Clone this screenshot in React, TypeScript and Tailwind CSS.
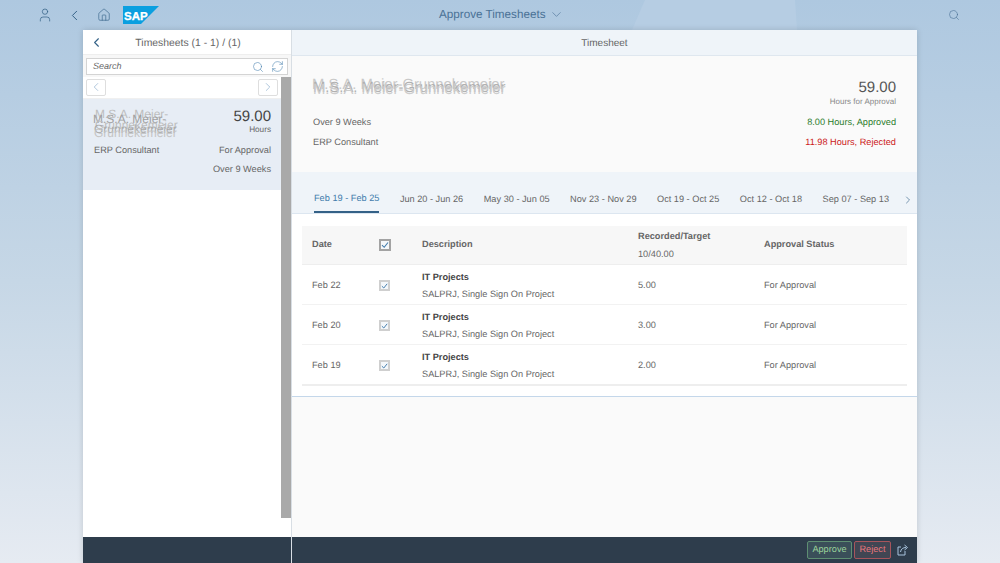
import React from "react";
import { ChevronLeft, ChevronRight, ChevronDown, Search, RefreshCw, Home, User } from "lucide-react";

function Scrambled({ lines, className }: { lines: { t: string; x: number; y: number; o: string }[]; className: string }) {
  return (
    <div className={"relative " + className}>
      {lines.map((l, i) => (
        <span key={i} className={"absolute left-0 top-0 whitespace-nowrap " + l.o} style={{ transform: `translate(${l.x}px, ${l.y}px)` }}>
          {l.t}
        </span>
      ))}
    </div>
  );
}

function Box({ size = "s" }: { size?: "s" | "h" }) {
  return (
    <div className={size === "h" ? "w-[12px] h-[12px] border-2 border-[#a3a3a3] bg-[#f4f7fa] flex items-center justify-center" : "w-[11px] h-[11px] border-2 border-[#cfcfcf] bg-[#f4f7fa] flex items-center justify-center"}>
      <svg width="8" height="8" viewBox="0 0 8 8" fill="none"><path d="M1 4.2 L3.2 6.3 L7 1.5" stroke="#427cac" strokeWidth="1.1" /></svg>
    </div>
  );
}

const rows = [
  { d: "Feb 22", h: "5.00" },
  { d: "Feb 20", h: "3.00" },
  { d: "Feb 19", h: "2.00" },
];
const tabs = ["Jun 20 - Jun 26", "May 30 - Jun 05", "Nov 23 - Nov 29", "Oct 19 - Oct 25", "Oct 12 - Oct 18", "Sep 07 - Sep 13"];

export default function App() {
  return (
    <div className="relative w-[1000px] h-[563px] overflow-hidden flex flex-col bg-gradient-to-b from-[#aec8e0] via-[#c6d7e6] to-[#e6ebf2] text-[#666666] text-[9.2px] [text-rendering:geometricPrecision]" style={{ fontFamily: '"Liberation Sans", Arial, sans-serif' }}>
      <svg className="absolute left-0 top-0" width="1000" height="563" viewBox="0 0 1000 563">
        <polygon points="632,30 645,0 795,0 797,30" fill="#b6cde3" />
      </svg>

      <header className="relative h-[30px] shrink-0 flex items-center text-[#346187]">
        <User size={16} strokeWidth={1.1} className="ml-[37px]" />
        <ChevronLeft size={17} strokeWidth={1.4} className="ml-[13px]" />
        <Home size={14} strokeWidth={1.1} className="ml-[14px]" />
        <svg width="36" height="18" viewBox="0 0 36 18" className="ml-[12px]">
          <polygon points="0,0 36,0 18,18 0,18" fill="#0a9fe0" />
          <text x="1" y="13.5" fontSize="11.5" fontWeight="700" fill="#ffffff" stroke="#ffffff" strokeWidth="0.3" fontFamily="Liberation Sans">SAP</text>
        </svg>
        <div className="ml-[280px] text-[11.7px] flex items-center gap-[3px] text-[#4a7196]">
          Approve Timesheets <ChevronDown size={15} strokeWidth={1} />
        </div>
        <Search size={12} strokeWidth={1.2} className="ml-[384px] text-[#4a7196]" />
      </header>

      <main className="relative flex-1 mx-[83px] flex min-h-0 shadow-[0_0_6px_rgba(0,0,0,0.15)]">
        <aside className="w-[209px] shrink-0 flex flex-col bg-white border-r border-[#d8dee4]">
          <div className="h-[25px] shrink-0 flex items-center relative justify-center text-[10.4px] text-[#666666] border-b border-[#eeeeee]">
            <ChevronLeft size={15} strokeWidth={1.8} className="absolute left-[6px] text-[#346187]" />
            <span className="pt-[3px] pl-[2px]">Timesheets (1 - 1) / (1)</span>
          </div>
          <div className="h-[22px] shrink-0 bg-[#f7f7f7] px-[3px] flex items-center">
            <div className="w-[164px] h-[17px] mt-[1px] flex-1 bg-white border border-[#d4d4d4] flex items-center pl-[6px] pr-[3px] justify-between">
              <span className="italic text-[#666666] text-[9px]">Search</span>
              <div className="flex items-center gap-[7px] text-[#427cac]">
                <Search size={12} strokeWidth={1.1} />
                <RefreshCw size={13} strokeWidth={1} />
              </div>
            </div>
          </div>
          <div className="flex-1 flex min-h-0">
            <div className="flex-1 flex flex-col min-w-0">
              <div className="h-[21px] shrink-0 flex items-center justify-between px-[3px] pb-[1px]">
                <div className="w-[20px] h-[17px] border border-[#dedede] rounded-[2px] flex items-center justify-center text-[#7ba1c4]"><ChevronLeft size={14} strokeWidth={1} /></div>
                <div className="w-[20px] h-[17px] border border-[#dedede] rounded-[2px] flex items-center justify-center text-[#7ba1c4]"><ChevronRight size={14} strokeWidth={1} /></div>
              </div>
              <div className="h-[92px] bg-[#e7edf5] pl-[11px] pr-[10px] pt-[9px] flex flex-col border-t border-[#f0f0f0]">
                <div className="flex justify-between h-[32px]">
                  <Scrambled
                    className="w-[84px] h-[32px] text-[12px] leading-[12px]"
                    lines={[
                      { t: "M.S.A. Meier-", x: 1, y: 0, o: "text-[#bdbdbd]" },
                      { t: "M.S.A. Meier-", x: -1, y: 5, o: "text-[#a0a0a0]" },
                      { t: "Grunnekemeier", x: 1, y: 11, o: "text-[#bdbdbd]" },
                      { t: "Grunnekemeier", x: 0, y: 15, o: "text-[#a8a8a8]" },
                      { t: "Grunnekemeier", x: 0, y: 19, o: "text-[#c4c4c4]" },
                    ]}
                  />
                  <div className="text-right">
                    <div className="text-[15px] leading-[17px] text-[#444444]">59.00</div>
                    <div className="text-[8.2px] leading-[9px]">Hours</div>
                  </div>
                </div>
                <div className="flex justify-between mt-[4px] leading-[12px]"><span>ERP Consultant</span><span>For Approval</span></div>
                <div className="text-right mt-[7px] leading-[12px]">Over 9 Weeks</div>
              </div>
            </div>
            <div className="w-[10px] shrink-0 h-[441px] bg-[#a9a9a9]"></div>
          </div>
          <div className="h-[26px] shrink-0 bg-[#2e3d4c]"></div>
        </aside>

        <section className="flex-1 min-w-0 flex flex-col bg-[#fafafa]">
          <div className="h-[26px] shrink-0 bg-[#eff4f9] border-b border-[#dfe7ef] flex items-center justify-center text-[10px] text-[#666666] pt-[2px]">Timesheet</div>
          <div className="h-[116px] shrink-0 px-[21px] pt-[24px]">
            <div className="flex justify-between h-[30px]">
              <Scrambled
                className="w-[194px] h-[20px] text-[14.8px] leading-[15px]"
                lines={[
                  { t: "M.S.A. Meier-Grunnekemeier", x: -1, y: -2, o: "text-[#c8c8c8]" },
                  { t: "M.S.A. Meier-Grunnekemeier", x: 0, y: 1, o: "text-[#b0b0b0]" },
                  { t: "M.S.A. Meier-Grunnekemeier", x: 0, y: 3, o: "text-[#cccccc]" },
                ]}
              />
              <div className="text-right -mt-[1px]">
                <div className="text-[15px] leading-[17px] text-[#555555]">59.00</div>
                <div className="text-[8px] leading-[10px] mt-[1px] text-[#888888]">Hours for Approval</div>
              </div>
            </div>
            <div className="flex justify-between leading-[12px] mt-[6px]"><span>Over 9 Weeks</span><span className="text-[#2b7c2b]">8.00 Hours, Approved</span></div>
            <div className="flex justify-between leading-[12px] mt-[8px]"><span>ERP Consultant</span><span className="text-[#cc1919]">11.98 Hours, Rejected</span></div>
          </div>
          <div className="h-[42px] shrink-0 bg-[#eff4f9] border-b border-[#dce6f0] flex items-stretch pl-[22px] whitespace-nowrap">
            <div className="h-full flex items-center border-b-2 border-[#346187] text-[#427cac] pt-[14px]">Feb 19 - Feb 25</div>
            {tabs.map((t) => (
              <div key={t} className="h-full flex items-center ml-[20.5px] pt-[14px]">{t}</div>
            ))}
            <ChevronRight size={12} strokeWidth={1.3} className="self-center ml-[13px] mt-[14px] text-[#346187]" />
          </div>
          <div className="h-[183px] shrink-0 bg-white border-b border-[#c4d7ea] px-[10px] pt-[12px]">
            <div className="h-[39px] bg-[#f7f7f7] flex items-center border-b border-[#eeeeee]">
              <div className="w-[77px] pl-[10px] font-bold text-[#666666]">Date</div>
              <div className="w-[43px]"><Box size="h" /></div>
              <div className="w-[216px] font-bold text-[#666666]">Description</div>
              <div className="w-[126px]">
                <div className="font-bold leading-[11px]">Recorded/Target</div>
                <div className="leading-[12px] mt-[6px]">10/40.00</div>
              </div>
              <div className="font-bold">Approval Status</div>
            </div>
            {rows.map((r, i) => (
              <div key={r.d} className={"flex items-center pt-[2px] " + (i === 2 ? "h-[41px] border-b-2 border-[#eeeeee]" : "h-[40px] border-b border-[#f2f2f2]")}>
                <div className="w-[77px] pl-[10px]">{r.d}</div>
                <div className="w-[43px]"><Box /></div>
                <div className="w-[216px]">
                  <div className="font-bold text-[#444444] leading-[12px]">IT Projects</div>
                  <div className="leading-[12px] mt-[5px]">SALPRJ, Single Sign On Project</div>
                </div>
                <div className="w-[126px]">{r.h}</div>
                <div>For Approval</div>
              </div>
            ))}
          </div>
          <div className="flex-1"></div>
          <div className="h-[26px] shrink-0 bg-[#2e3d4c] flex items-center justify-end pr-[8px]">
            <div className="h-[18px] w-[45px] rounded-[2px] border border-[#5e8f72] bg-[#3a4f59] text-[#9bd39b] flex items-center justify-center">Approve</div>
            <div className="h-[18px] w-[37px] ml-[2px] rounded-[2px] border border-[#a6555c] bg-[#414653] text-[#e8777d] flex items-center justify-center">Reject</div>
            <svg width="12" height="12" viewBox="0 0 12 12" fill="none" stroke="#a8c4dd" strokeWidth="1" className="ml-[6px]">
              <path d="M8 7 V11 H1 V3 H4" />
              <path d="M3.5 8 C4 5 6 3.5 9 3.5" />
              <path d="M7.5 1 L10.5 3.5 L7.5 6" />
            </svg>
          </div>
        </section>
      </main>
    </div>
  );
}
